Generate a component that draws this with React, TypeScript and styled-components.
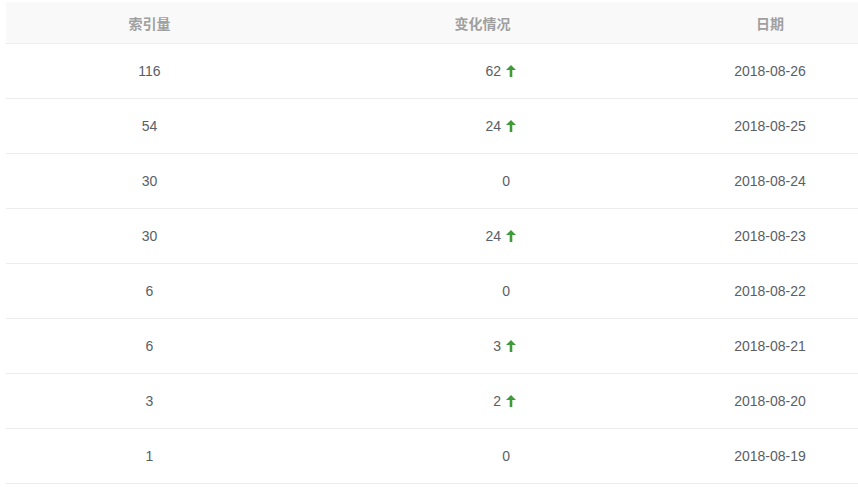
import React from "react";
import styled, { createGlobalStyle } from "styled-components";

const GlobalStyle = createGlobalStyle`
  html, body {
    margin: 0;
    padding: 0;
    background: #fff;
    overflow: hidden;
  }
  body {
    font-family: "Liberation Sans", "Noto Sans CJK SC", sans-serif;
  }
`;

const Wrapper = styled.div`
  padding: 2px 0 0 6px;
`;

const Table = styled.div`
  width: 862px;
`;

const Row = styled.div<{ $head?: boolean }>`
  display: grid;
  grid-template-columns: 287px 379px 196px;
  align-items: center;
  height: ${(p) => (p.$head ? "41px" : "54px")};
  border-bottom: 1px solid #ededed;
  background: ${(p) => (p.$head ? "#f9f9f9" : "#fff")};
`;

const HeadCell = styled.div`
  text-align: center;
  font-family: "Noto Sans CJK SC", sans-serif;
  font-size: 14px;
  font-weight: 700;
  color: #a0a0a0;
`;

const Cell = styled.div`
  text-align: center;
  font-size: 14px;
  color: #5a5e66;
`;

const Change = styled.div`
  display: flex;
  justify-content: center;
  align-items: center;
  font-size: 14px;
  color: #5a5e66;
`;

const Num = styled.span`
  display: inline-block;
  width: 55px;
  text-align: right;
`;

const Arrow = styled.span`
  display: inline-flex;
  width: 18px;
  padding-left: 5px;
  box-sizing: border-box;
  svg {
    display: block;
  }
`;

const rows = [
  { count: 116, change: 62, date: "2018-08-26" },
  { count: 54, change: 24, date: "2018-08-25" },
  { count: 30, change: 0, date: "2018-08-24" },
  { count: 30, change: 24, date: "2018-08-23" },
  { count: 6, change: 0, date: "2018-08-22" },
  { count: 6, change: 3, date: "2018-08-21" },
  { count: 3, change: 2, date: "2018-08-20" },
  { count: 1, change: 0, date: "2018-08-19" },
];

function UpArrow() {
  return (
    <svg width="10" height="12" viewBox="0 0 10 12">
      <path d="M5 0 L10 5 L6.3 5 L6.3 12 L3.7 12 L3.7 5 L0 5 Z" fill="#3f9a3a" />
    </svg>
  );
}

export default function App() {
  return (
    <Wrapper>
      <GlobalStyle />
      <Table>
        <Row $head>
          <HeadCell>索引量</HeadCell>
          <HeadCell>变化情况</HeadCell>
          <HeadCell>日期</HeadCell>
        </Row>
        {rows.map((r, i) => (
          <Row key={i}>
            <Cell>{r.count}</Cell>
            <Change>
              <Num>{r.change}</Num>
              {r.change > 0 && (
                <Arrow>
                  <UpArrow />
                </Arrow>
              )}
            </Change>
            <Cell>{r.date}</Cell>
          </Row>
        ))}
      </Table>
    </Wrapper>
  );
}
